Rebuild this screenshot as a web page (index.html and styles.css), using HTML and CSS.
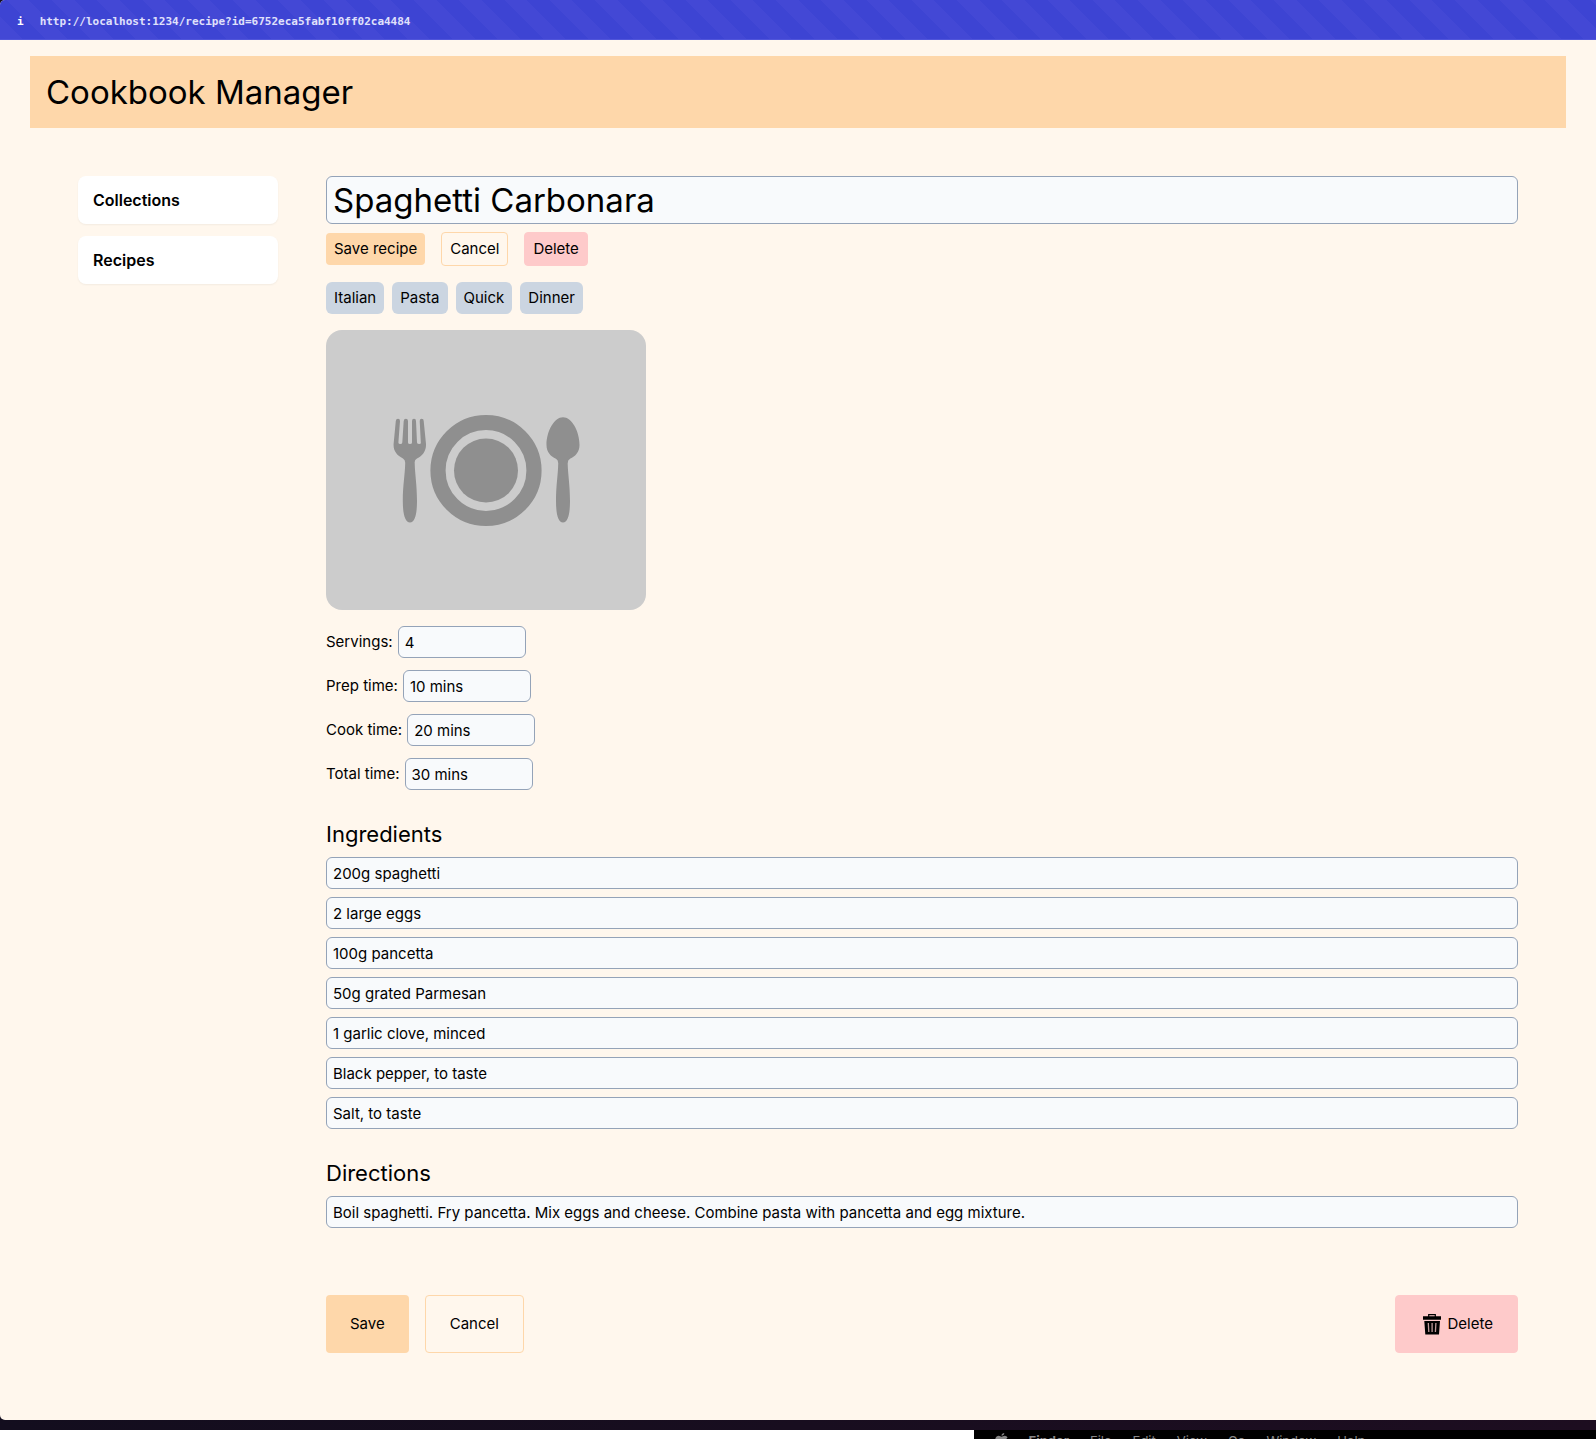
FILE: index.html
```html
<!DOCTYPE html>
<html lang="en">
<head>
<meta charset="utf-8">
<meta name="viewport" content="width=device-width, initial-scale=1">
<title>Cookbook Manager</title>
<link rel="stylesheet" href="styles.css">
</head>
<body>
<div class="window">
  <div class="address-bar">
    <span class="address-info">i</span>
    <span class="address-url">http://localhost:1234/recipe?id=6752eca5fabf10ff02ca4484</span>
  </div>
  <header class="site-header"><h1 class="site-title">Cookbook Manager</h1></header>
  <div class="layout">
    <nav class="sidebar">
      <a class="nav-card" href="#collections">Collections</a>
      <a class="nav-card" href="#recipes">Recipes</a>
    </nav>
    <main>
      <form class="recipe">
        <input class="field title-field" type="text" aria-label="Recipe title" value="Spaghetti Carbonara">
        <div class="toolbar">
          <button class="btn btn-primary" type="button">Save recipe</button>
          <button class="btn btn-outline" type="button">Cancel</button>
          <button class="btn btn-danger" type="button">Delete</button>
        </div>
        <ul class="tags">
          <li class="tag">Italian</li>
          <li class="tag">Pasta</li>
          <li class="tag">Quick</li>
          <li class="tag">Dinner</li>
        </ul>
        <svg class="photo" viewBox="0 0 320 280" role="img" aria-label="Plate, fork and spoon">
          <rect width="320" height="280" fill="#ccc"/>
          <g fill="#8f8f8f">
            <circle cx="160" cy="140.500" r="48" fill="none" stroke="#8f8f8f" stroke-width="15.200"/>
            <circle cx="160" cy="140.500" r="32"/>
            <path d="M69.800 91Q70 88.800 72 88.800T74 91L72.400 112.500Q72.400 114 74.300 114T76.300 112.500L77.700 91Q77.900 88.800 79.900 88.800T82 91V112.500Q82 114 84 114T86 112.500V91Q86 88.800 88 88.800T90 91L91 112.500Q91.200 114 93.200 114T94.800 112.500L93.700 91Q93.700 88.800 95.700 88.800T97.700 91L100 114C100.300 121 96.500 126 91 128.500Q88.400 129.700 88.700 133C89 145 91 155 91 171C91 184 89 192.500 84 192.500S76.800 184 76.800 171C76.800 155 79 145 79.200 133Q79.300 129.700 77 128.500C71 125.500 67.200 121 67.600 114Z"/>
            <path d="M237 87.300C245.500 87.300 253.500 101 253.500 115C253.500 122 249.500 126.300 244 128.800Q241.500 130 241.700 134C242 145 244 155 244 171C244 184 242 192.500 237 192.500S230 184 230 171C230 155 232 145 232.200 134Q232.500 130 230 128.800C224.500 126.300 220.500 122 220.500 115C220.500 101 228.500 87.300 237 87.300Z"/>
          </g>
        </svg>
        <div class="facts">
          <div class="fact"><label for="servings">Servings:</label><input class="field fact-field" id="servings" type="text" value="4"></div>
          <div class="fact"><label for="prep">Prep time:</label><input class="field fact-field" id="prep" type="text" value="10 mins"></div>
          <div class="fact"><label for="cook">Cook time:</label><input class="field fact-field" id="cook" type="text" value="20 mins"></div>
          <div class="fact"><label for="total">Total time:</label><input class="field fact-field" id="total" type="text" value="30 mins"></div>
        </div>
        <section class="section">
          <h2 class="section-title">Ingredients</h2>
          <div class="lines">
            <input class="field" type="text" aria-label="Ingredient 1" value="200g spaghetti">
            <input class="field" type="text" aria-label="Ingredient 2" value="2 large eggs">
            <input class="field" type="text" aria-label="Ingredient 3" value="100g pancetta">
            <input class="field" type="text" aria-label="Ingredient 4" value="50g grated Parmesan">
            <input class="field" type="text" aria-label="Ingredient 5" value="1 garlic clove, minced">
            <input class="field" type="text" aria-label="Ingredient 6" value="Black pepper, to taste">
            <input class="field" type="text" aria-label="Ingredient 7" value="Salt, to taste">
          </div>
        </section>
        <section class="section">
          <h2 class="section-title" id="directions">Directions</h2>
          <div class="lines">
            <input class="field" type="text" aria-labelledby="directions" value="Boil spaghetti. Fry pancetta. Mix eggs and cheese. Combine pasta with pancetta and egg mixture.">
          </div>
        </section>
        <div class="actions">
          <button class="btn btn-large btn-primary" type="submit">Save</button>
          <button class="btn btn-large btn-outline" type="button">Cancel</button>
          <button class="btn btn-large btn-danger btn-end" type="button">
            <svg class="icon" viewBox="-2 0 24 24" aria-hidden="true">
              <path d="M6.700 5V2.700H13.300V5" fill="none" stroke="#000" stroke-width="1.200"/>
              <path d="M1 4.200H19V7.800H1ZM2.300 9H18L17 22.500H3.300Z"/>
              <path d="M6.300 11L6.800 20M10.100 11V20M13.900 11L13.400 20" stroke="#c09a9a" stroke-width="1.300"/>
            </svg>
            Delete
          </button>
        </div>
      </form>
    </main>
  </div>
</div>
<footer class="desktop">
  <div class="desktop-page"></div>
  <div class="menu-bar">
    <svg class="menu-logo" viewBox="0 0 14 16" aria-hidden="true"><path d="M7 3C7 1 8.500 0 10 0C10 2 8.500 3 7 3ZM7 4C8 4 9 3 10.500 3S13 4 13.500 5C11 6.500 11.500 10 14 11C13 14 11.500 16 10 16S8 15 7 15S5.500 16 4.500 16C2 16 0 12 0 8.500C0 5 2 3 4 3C5.500 3 6 4 7 4Z"/></svg>
    <b>Finder</b><span>File</span><span>Edit</span><span>View</span><span>Go</span><span>Window</span><span>Help</span>
  </div>
</footer>
</body>
</html>
```
FILE: styles.css
```css
*,
*::before,
*::after {
  box-sizing: border-box;
}

body {
  margin: 0;
  background: linear-gradient(90deg, #130d1e, #1d0d20);
  color: #000;
  font: 15px/24px Inter, "Liberation Sans", sans-serif;
}

h1,
h2,
ul {
  margin: 0;
  padding: 0;
  font-weight: 400;
}

.window {
  overflow: hidden;
  border-radius: 5px 0 0 5px;
  background: #fff7ed;
}

.address-bar {
  display: flex;
  align-items: center;
  gap: 16px;
  height: 40px;
  padding: 4px 17px 0;
  border-bottom: 1px solid #5055da;
  background: repeating-linear-gradient(45deg, #4348d5 0 16px, #3d44d3 16px 32px);
  color: #e0e1fb;
  font: bold 11px/16px "DejaVu Sans Mono", "Liberation Mono", monospace;
}

.address-info {
  color: #fff;
}

.site-header {
  margin: 16px 30px 0;
  padding: 16px;
  background: #fed7aa;
}

.site-title {
  font-size: 33px;
  line-height: 40px;
}

.layout {
  display: grid;
  grid-template-columns: 200px minmax(0, 1fr);
  gap: 48px;
  padding: 48px 78px 67px;
}

.sidebar {
  display: flex;
  flex-direction: column;
  gap: 12px;
}

.nav-card {
  padding: 12px 15px;
  border-radius: 8px;
  background: #fff;
  box-shadow: 0 1px 2px rgb(0 0 0 / 5%);
  color: inherit;
  font-size: 16px;
  font-weight: 600;
  text-decoration: none;
}

.recipe {
  display: flex;
  flex-direction: column;
}

.field {
  width: 100%;
  height: 32px;
  padding: 0 6px;
  border: 1px solid #94a3b8;
  border-radius: 6px;
  background: #f8fafc;
  color: inherit;
  font: inherit;
}

.title-field {
  height: 48px;
  font-size: 33px;
}

.toolbar {
  display: flex;
  align-items: center;
  gap: 16px;
  margin-top: 8px;
}

.btn {
  display: inline-flex;
  align-items: center;
  justify-content: center;
  gap: 4px;
  padding: 4px 8px;
  border: 0;
  border-radius: 4px;
  color: inherit;
  font: inherit;
}

.btn-primary {
  background: #fed7aa;
}

.btn-outline {
  border: 1px solid #fed7aa;
  background: transparent;
}

.btn-danger {
  border: 1px solid #fecaca;
  background: #fecaca;
}

.tags {
  display: flex;
  gap: 8px;
  margin: 16px 0;
  list-style: none;
}

.tag {
  padding: 4px 8px;
  border-radius: 6px;
  background: #cbd5e1;
}

.photo {
  width: 320px;
  border-radius: 16px;
}

.facts {
  display: flex;
  flex-direction: column;
  gap: 12px;
  margin-top: 16px;
}

.fact {
  display: flex;
  align-items: center;
  gap: 5px;
}

.fact-field {
  width: 128px;
}

.section {
  margin-top: 28px;
}

.section-title {
  font-size: 22px;
  line-height: 32px;
}

.lines {
  display: flex;
  flex-direction: column;
  gap: 8px;
  margin-top: 7px;
}

.actions {
  display: flex;
  gap: 16px;
  margin-top: 67px;
}

.btn-large {
  padding: 16px 24px;
}

.btn-end {
  margin-left: auto;
}

.icon {
  width: 24px;
  height: 24px;
}

.desktop {
  display: flex;
  height: 19px;
  padding-top: 10px;
  overflow: hidden;
}

.desktop-page {
  flex: 0 0 61%;
  background: #fff;
}

.menu-bar {
  display: flex;
  flex: 1;
  gap: 21px;
  height: 24px;
  padding: 3px 21px;
  background: #000;
  color: #888;
  font-size: 13px;
  line-height: 16px;
}

.menu-logo {
  width: 13px;
  height: 15px;
  fill: currentColor;
}
```
